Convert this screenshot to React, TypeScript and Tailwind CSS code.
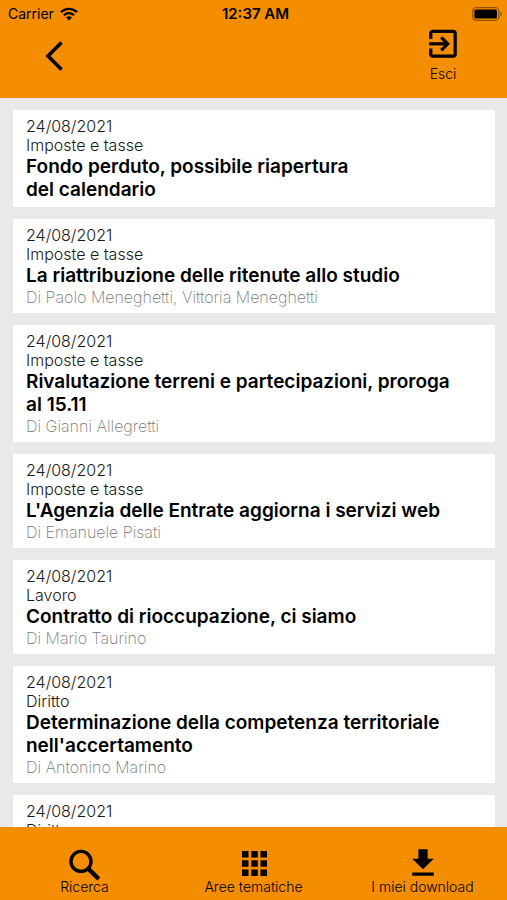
import type { ReactNode } from "react";

interface Article {
  id: number;
  date: string;
  category: string;
  title: string;
  author?: string;
}

const articles: Article[] = [
  {
    id: 1,
    date: "24/08/2021",
    category: "Imposte e tasse",
    title: "Fondo perduto, possibile riapertura\ndel calendario",
  },
  {
    id: 2,
    date: "24/08/2021",
    category: "Imposte e tasse",
    title: "La riattribuzione delle ritenute allo studio",
    author: "Paolo Meneghetti, Vittoria Meneghetti",
  },
  {
    id: 3,
    date: "24/08/2021",
    category: "Imposte e tasse",
    title: "Rivalutazione terreni e partecipazioni, proroga\nal 15.11",
    author: "Gianni Allegretti",
  },
  {
    id: 4,
    date: "24/08/2021",
    category: "Imposte e tasse",
    title: "L'Agenzia delle Entrate aggiorna i servizi web",
    author: "Emanuele Pisati",
  },
  {
    id: 5,
    date: "24/08/2021",
    category: "Lavoro",
    title: "Contratto di rioccupazione, ci siamo",
    author: "Mario Taurino",
  },
  {
    id: 6,
    date: "24/08/2021",
    category: "Diritto",
    title: "Determinazione della competenza territoriale\nnell'accertamento",
    author: "Antonino Marino",
  },
  { id: 7, date: "24/08/2021", category: "Diritto", title: "" },
];

function StatusBar() {
  return (
    <div className="grid h-7 grid-cols-3 items-center pl-2 pr-1 text-sm leading-4">
      <div className="flex items-center gap-1.5">
        <span>Carrier</span>
        <svg className="h-3.5 w-[18px]" viewBox="0 0 18 14" fill="none" stroke="black">
          <path d="M1 5.2a11.5 11.5 0 0 1 16 0" strokeWidth="2.3" />
          <path d="M3.9 8.2a7.3 7.3 0 0 1 10.2 0" strokeWidth="2.2" />
          <path d="M9 13.6 6.1 10.6a4.2 4.2 0 0 1 5.8 0Z" fill="black" stroke="none" />
        </svg>
      </div>
      <span className="text-center text-[15px] font-semibold">12:37 AM</span>
      <svg className="h-3.5 w-[31px] justify-self-end" viewBox="0 0 31 14">
        <rect x="0.7" y="0.7" width="26" height="12.6" rx="3.6" fill="none" stroke="black" strokeOpacity="0.4" strokeWidth="1.2" />
        <rect x="2.4" y="2.4" width="22.6" height="9.2" rx="1.6" />
        <path d="M28.3 4.8c2 .7 2 3.7 0 4.4Z" fillOpacity="0.45" />
      </svg>
    </div>
  );
}

function ArticleCard({ article }: { article: Article }) {
  return (
    <article className="bg-white px-[13px] pt-[7px] pb-1.5">
      <p className="text-base leading-[19px] font-light text-[#1a1a1a]">{article.date}</p>
      <p className="text-base leading-[19px] font-light text-[#1a1a1a]">{article.category}</p>
      <h2 className="min-h-[23px] text-[19px] leading-[23px] font-semibold whitespace-pre-line text-black">
        {article.title}
      </h2>
      {article.author && (
        <p className="text-base leading-5 font-extralight text-[#777777]">Di {article.author}</p>
      )}
    </article>
  );
}

function TabButton({ label, children }: { label: string; children: ReactNode }) {
  return (
    <button type="button" className="flex flex-1 flex-col items-center pt-5">
      {children}
      <span className="text-sm leading-4 font-light">{label}</span>
    </button>
  );
}

export default function App() {
  return (
    <div className="flex h-screen flex-col bg-[#e9e9e9] font-['Inter',sans-serif] text-black">
      <header className="h-[98px] shrink-0 bg-[#f48d00]">
        <StatusBar />
        <div className="flex justify-between pl-[43px] pr-12">
          <button type="button" aria-label="Indietro" className="h-14">
            <svg className="h-8 w-6" viewBox="0 0 24 32" fill="none" stroke="black" strokeWidth="3.6">
              <path d="M18.5 2.5 5 16l13.5 13.5" />
            </svg>
          </button>
          <button type="button" className="flex flex-col items-center gap-1.5">
            <svg className="size-8" viewBox="0 0 32 32" fill="none" stroke="black" strokeWidth="3.2">
              <path d="M3.8 11V5.2A1.8 1.8 0 0 1 5.6 3.4H26.4A1.8 1.8 0 0 1 28.2 5.2V26.4A1.8 1.8 0 0 1 26.4 28.2H5.6A1.8 1.8 0 0 1 3.8 26.4V20.5" />
              <path d="M2.2 15.8H20" />
              <path d="m14.2 9.3 6.5 6.5-6.5 6.5" />
            </svg>
            <span className="text-sm leading-4 font-light">Esci</span>
          </button>
        </div>
      </header>

      <main className="flex min-h-0 flex-1 flex-col gap-3 overflow-y-auto py-3 pr-3 pl-[13px] [scrollbar-width:none]">
        {articles.map((article) => (
          <ArticleCard key={article.id} article={article} />
        ))}
      </main>

      <nav className="flex h-[73px] shrink-0 bg-[#f48d00]">
        <TabButton label="Ricerca">
          <svg className="size-8 overflow-visible" viewBox="0 0 32 32" fill="none" stroke="black">
            <circle cx="12" cy="14.4" r="10" strokeWidth="3.4" />
            <path d="m19.2 21.6 10.6 10.4" strokeWidth="4.4" />
          </svg>
        </TabButton>
        <TabButton label="Aree tematiche">
          <svg className="size-8" viewBox="0 0 32 32">
            <path d="M4 4h6.5v6.5H4zM13.3 4h6.5v6.5h-6.5zM22.5 4H29v6.5h-6.5zM4 13.2h6.5v6.5H4zM13.3 13.2h6.5v6.5h-6.5zM22.5 13.2H29v6.5h-6.5zM4 22.4h6.5v6.5H4zM13.3 22.4h6.5v6.5h-6.5zM22.5 22.4H29v6.5h-6.5z" />
          </svg>
        </TabButton>
        <TabButton label="I miei download">
          <svg className="size-8" viewBox="0 0 32 32">
            <path d="M11.4 2.3h9.2v9.4h6.2L16 22.3 5.2 11.7h6.2zM5.2 25.4h21.6v3.4H5.2z" />
          </svg>
        </TabButton>
      </nav>
    </div>
  );
}
